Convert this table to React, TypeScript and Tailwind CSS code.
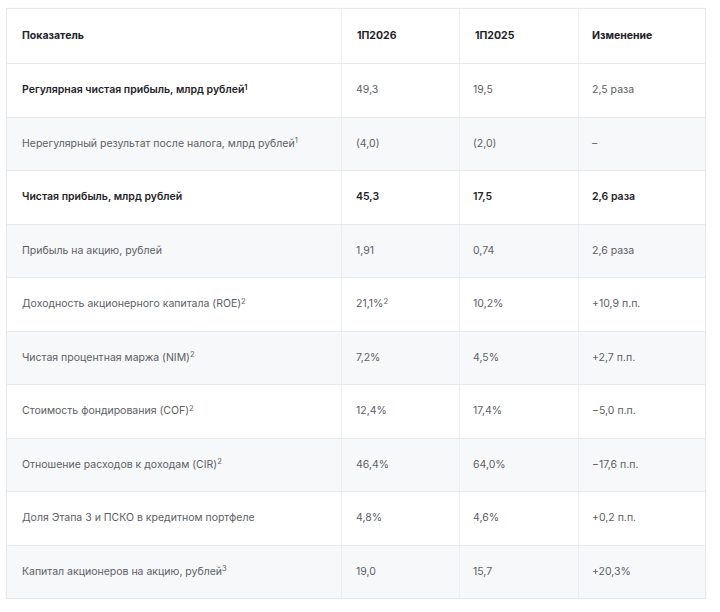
import React from "react";

type Row = {
  label: string;
  sup?: string;
  a: string;
  aSup?: string;
  b: string;
  c: string;
  bold?: boolean;
  boldValues?: boolean;
};

const rows: Row[] = [
  { label: "Регулярная чистая прибыль, млрд рублей", sup: "1", a: "49,3", b: "19,5", c: "2,5 раза", bold: true },
  { label: "Нерегулярный результат после налога, млрд рублей", sup: "1", a: "(4,0)", b: "(2,0)", c: "–" },
  { label: "Чистая прибыль, млрд рублей", a: "45,3", b: "17,5", c: "2,6 раза", bold: true, boldValues: true },
  { label: "Прибыль на акцию, рублей", a: "1,91", b: "0,74", c: "2,6 раза" },
  { label: "Доходность акционерного капитала (ROE)", sup: "2", a: "21,1%", aSup: "2", b: "10,2%", c: "+10,9 п.п." },
  { label: "Чистая процентная маржа (NIM)", sup: "2", a: "7,2%", b: "4,5%", c: "+2,7 п.п." },
  { label: "Стоимость фондирования (COF)", sup: "2", a: "12,4%", b: "17,4%", c: "−5,0 п.п." },
  { label: "Отношение расходов к доходам (CIR)", sup: "2", a: "46,4%", b: "64,0%", c: "−17,6 п.п." },
  { label: "Доля Этапа 3 и ПСКО в кредитном портфеле", a: "4,8%", b: "4,6%", c: "+0,2 п.п." },
  { label: "Капитал акционеров на акцию, рублей", sup: "3", a: "19,0", b: "15,7", c: "+20,3%" },
];

const dark = "font-semibold text-[#1f2329]";
const muted = "text-[#5c6066]";

export default function App() {
  return (
    <div className="w-[720px] h-[612px] bg-white pt-2 pl-[6px] font-['Inter',sans-serif]">
      <div className="w-[700px] border border-[#e6e8ec] shadow-[0_0_2px_rgba(0,0,0,0.04)]">
        {/* header */}
        <div className="grid grid-cols-[335px_118px_119px_1fr] h-[54px] items-center bg-white text-[10.5px] font-bold text-[#1f2329]">
          <div className="pl-[15px] h-full flex items-center border-r border-[#eceef1]">Показатель</div>
          <div className="pl-[15px] h-full flex items-center border-r border-[#eceef1]">1П2026</div>
          <div className="pl-[15px] h-full flex items-center border-r border-[#eceef1]">1П2025</div>
          <div className="pl-[13px] h-full flex items-center">Изменение</div>
        </div>
        {rows.map((r, i) => (
          <div
            key={i}
            className={`grid grid-cols-[335px_118px_119px_1fr] h-[53.5px] border-t border-[#e6e8ec] text-[10.5px] ${
              i % 2 === 1 ? "bg-[#f7f8fa]" : "bg-white"
            } ${r.boldValues ? dark : muted}`}
          >
            <div className={`pl-[15px] flex items-center border-r border-[#eceef1] ${r.bold ? dark : muted}`}>
              <span>
                {r.label}
                {r.sup && <sup className="text-[7.5px]">{r.sup}</sup>}
              </span>
            </div>
            <div className="pl-[14px] flex items-center border-r border-[#eceef1]">
              <span>
                {r.a}
                {r.aSup && <sup className="text-[7.5px]">{r.aSup}</sup>}
              </span>
            </div>
            <div className="pl-[13px] flex items-center border-r border-[#eceef1]">{r.b}</div>
            <div className="pl-[13px] flex items-center">{r.c}</div>
          </div>
        ))}
      </div>
    </div>
  );
}
